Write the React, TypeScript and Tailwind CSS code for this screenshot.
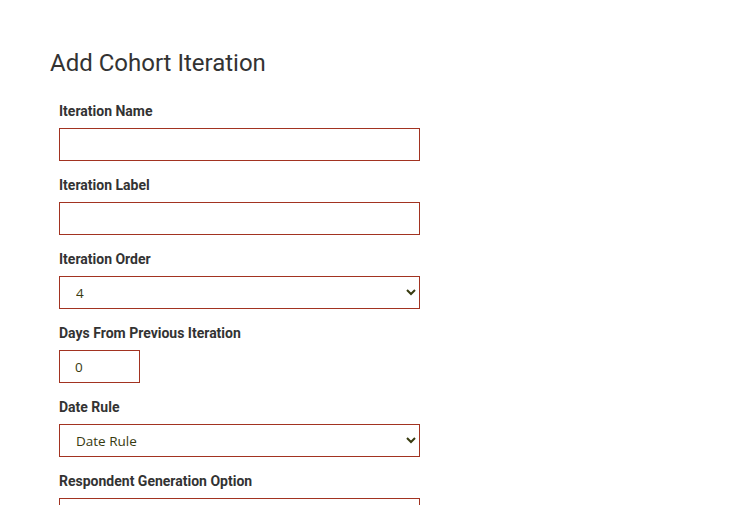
import { useState } from "react";

const labelCls = "block text-[14px] leading-[20px] font-bold text-[#333] mb-[7px]";
const boxCls =
  "h-[33px] border border-[#a23321] bg-white text-[13.5px] text-[#383b10] outline-none";

function Field({ label, children }: { label: string; children: React.ReactNode }) {
  return (
    <div className="mb-[14px]">
      <label className={labelCls}>{label}</label>
      {children}
    </div>
  );
}

export default function App() {
  const [name, setName] = useState("");
  const [lbl, setLbl] = useState("");
  const [order, setOrder] = useState("4");
  const [days, setDays] = useState("0");
  const [rule, setRule] = useState("");

  return (
    <div className="w-[748px] h-[505px] overflow-hidden bg-white" style={{ fontFamily: "Roboto, 'Liberation Sans', sans-serif" }}>
      <div className="pl-[50px] pt-[47px]">
        <h1 className="text-[24px] leading-[32px] font-normal text-[#333] mb-[22px]">Add Cohort Iteration</h1>
        <form className="pl-[9px]">
          <Field label="Iteration Name">
            <input className={`${boxCls} w-[361px] px-4`} value={name} onChange={(e) => setName(e.target.value)} />
          </Field>
          <Field label="Iteration Label">
            <input className={`${boxCls} w-[361px] px-4`} value={lbl} onChange={(e) => setLbl(e.target.value)} />
          </Field>
          <Field label="Iteration Order">
            <select
              className={`${boxCls} w-[361px] pl-[12px] pr-1`}
              style={{ fontFamily: "'Open Sans', sans-serif" }}
              value={order}
              onChange={(e) => setOrder(e.target.value)}
            >
              {[1, 2, 3, 4, 5].map((n) => (
                <option key={n} value={String(n)}>{n}</option>
              ))}
            </select>
          </Field>
          <Field label="Days From Previous Iteration">
            <input
              className={`${boxCls} w-[81px] px-[15px]`}
              style={{ fontFamily: "'Open Sans', sans-serif" }}
              value={days}
              onChange={(e) => setDays(e.target.value)}
            />
          </Field>
          <Field label="Date Rule">
            <select
              className={`${boxCls} w-[361px] pl-[12px] pr-1`}
              style={{ fontFamily: "'Open Sans', sans-serif" }}
              value={rule}
              onChange={(e) => setRule(e.target.value)}
            >
              <option value="">Date Rule</option>
              <option value="fixed">Fixed Date</option>
              <option value="relative">Relative Date</option>
            </select>
          </Field>
          <Field label="Respondent Generation Option">
            <select className={`${boxCls} w-[361px] pl-[12px] pr-1`} style={{ fontFamily: "'Open Sans', sans-serif" }}>
              <option>Respondent Generation Option</option>
            </select>
          </Field>
        </form>
      </div>
    </div>
  );
}
